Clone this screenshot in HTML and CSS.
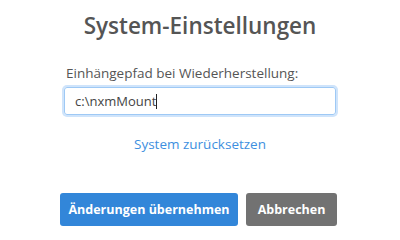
FILE: index.html
```html
<!DOCTYPE html>
<html lang="de">
<head>
    <meta charset="UTF-8">
    <title>System-Einstellungen</title>
    <link rel="stylesheet" href="styles.css">
</head>
<body>

<div class="dialog">
    <!-- Title -->
    <h2 class="title">System-Einstellungen</h2>

    <!-- Mount path -->
    <div class="field">
        <label for="mount-path">Einhängepfad bei Wiederherstellung:</label>
        <div class="input-box">
            <span class="value">c:\nxmMount</span><span class="caret"></span>
        </div>
    </div>

    <a class="reset-link" href="#">System zurücksetzen</a>

    <!-- Buttons -->
    <div class="actions">
        <button class="btn btn-primary">Änderungen übernehmen</button>
        <button class="btn btn-secondary">Abbrechen</button>
    </div>
</div>

</body>
</html>
```

FILE: styles.css
```css
body {
    font-family: "Open Sans", "Noto Sans", sans-serif;
    margin: 0;
    padding: 0;
    background: #fff;
    color: #555;
}

.dialog {
    width: 280px;
    margin: 0 auto;
    padding-top: 11px;
    display: flex;
    flex-direction: column;
}

.title {
    margin: 0 0 23px;
    text-align: center;
    font-size: 22.5px;
    font-weight: 600;
    color: #555;
    line-height: 30px;
}

.field {
    padding: 0 4px 0 4px;
}

.field label {
    display: block;
    font-size: 13.5px;
    line-height: 18px;
    margin: 0 0 5px 2px;
    color: #555;
}

.input-box {
    height: 26px;
    border: 1px solid #9ec9f5;
    border-radius: 3px;
    box-shadow: 0 0 0 2px #cfe4fb;
    display: flex;
    align-items: center;
    padding: 0 10px;
    font-size: 13px;
    color: #444;
}

.caret {
    display: inline-block;
    width: 1px;
    height: 15px;
    background: #222;
}

.reset-link {
    align-self: center;
    margin-top: 20px;
    font-size: 13.5px;
    color: #3d8fe0;
    text-decoration: none;
}

.actions {
    display: flex;
    gap: 8px;
    margin-top: 40px;
}

.btn {
    font-family: inherit;
    font-size: 12.5px;
    font-weight: 700;
    color: #fff;
    border: none;
    border-radius: 3px;
    height: 33px;
    padding: 0;
    white-space: nowrap;
}

.btn-primary {
    background: #3286d9;
    width: 178px;
}

.btn-secondary {
    background: #727272;
    width: 91px;
}
```
